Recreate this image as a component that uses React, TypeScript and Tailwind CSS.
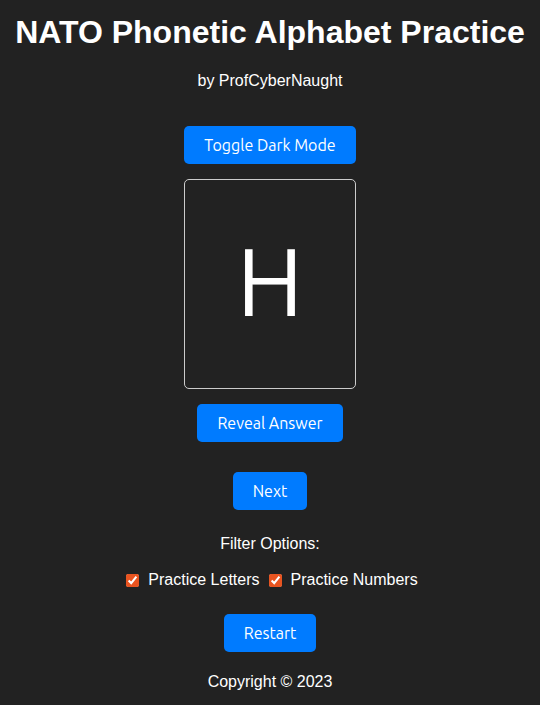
import React from "react";

const btn =
  "bg-[#007bff] text-white text-[16px] leading-[18px] px-5 py-[10px] rounded-[5px] font-['Ubuntu','Noto_Sans',sans-serif]";

export default function App() {
  return (
    <div className="min-h-[705px] w-full bg-[#222222] text-white font-['Liberation_Sans',Arial,sans-serif] flex flex-col items-center">
      <h1 className="mt-[14px] text-[32px] leading-[37px] font-bold">NATO Phonetic Alphabet Practice</h1>
      <p className="mt-[21px] text-[16px] leading-[18px]">by ProfCyberNaught</p>
      <button className={`${btn} mt-[36px]`}>Toggle Dark Mode</button>
      <div className="mt-[15px] w-[172px] h-[210px] border border-[#cccccc] rounded-[5px] flex items-center justify-center">
        <span className="pb-[6px] text-[96px] leading-none font-normal font-['Ubuntu',sans-serif]">H</span>
      </div>
      <button className={`${btn} mt-[15px]`}>Reveal Answer</button>
      <button className={`${btn} mt-[30px]`}>Next</button>
      <p className="mt-[25px] text-[16px] leading-[18px]">Filter Options:</p>
      <div className="mt-[18px] pl-[4px] flex items-center text-[16px] leading-[18px]">
        <label className="flex items-center">
          <input type="checkbox" defaultChecked className="w-[13px] h-[13px] m-0 mr-[9px] accent-[#e95420]" />
          Practice Letters
        </label>
        <label className="flex items-center ml-[9px]">
          <input type="checkbox" defaultChecked className="w-[13px] h-[13px] m-0 mr-[9px] accent-[#e95420]" />
          Practice Numbers
        </label>
      </div>
      <button className={`${btn} mt-[25px]`}>Restart</button>
      <p className="mt-[21px] text-[16px] leading-[18px]">Copyright © 2023</p>
    </div>
  );
}
